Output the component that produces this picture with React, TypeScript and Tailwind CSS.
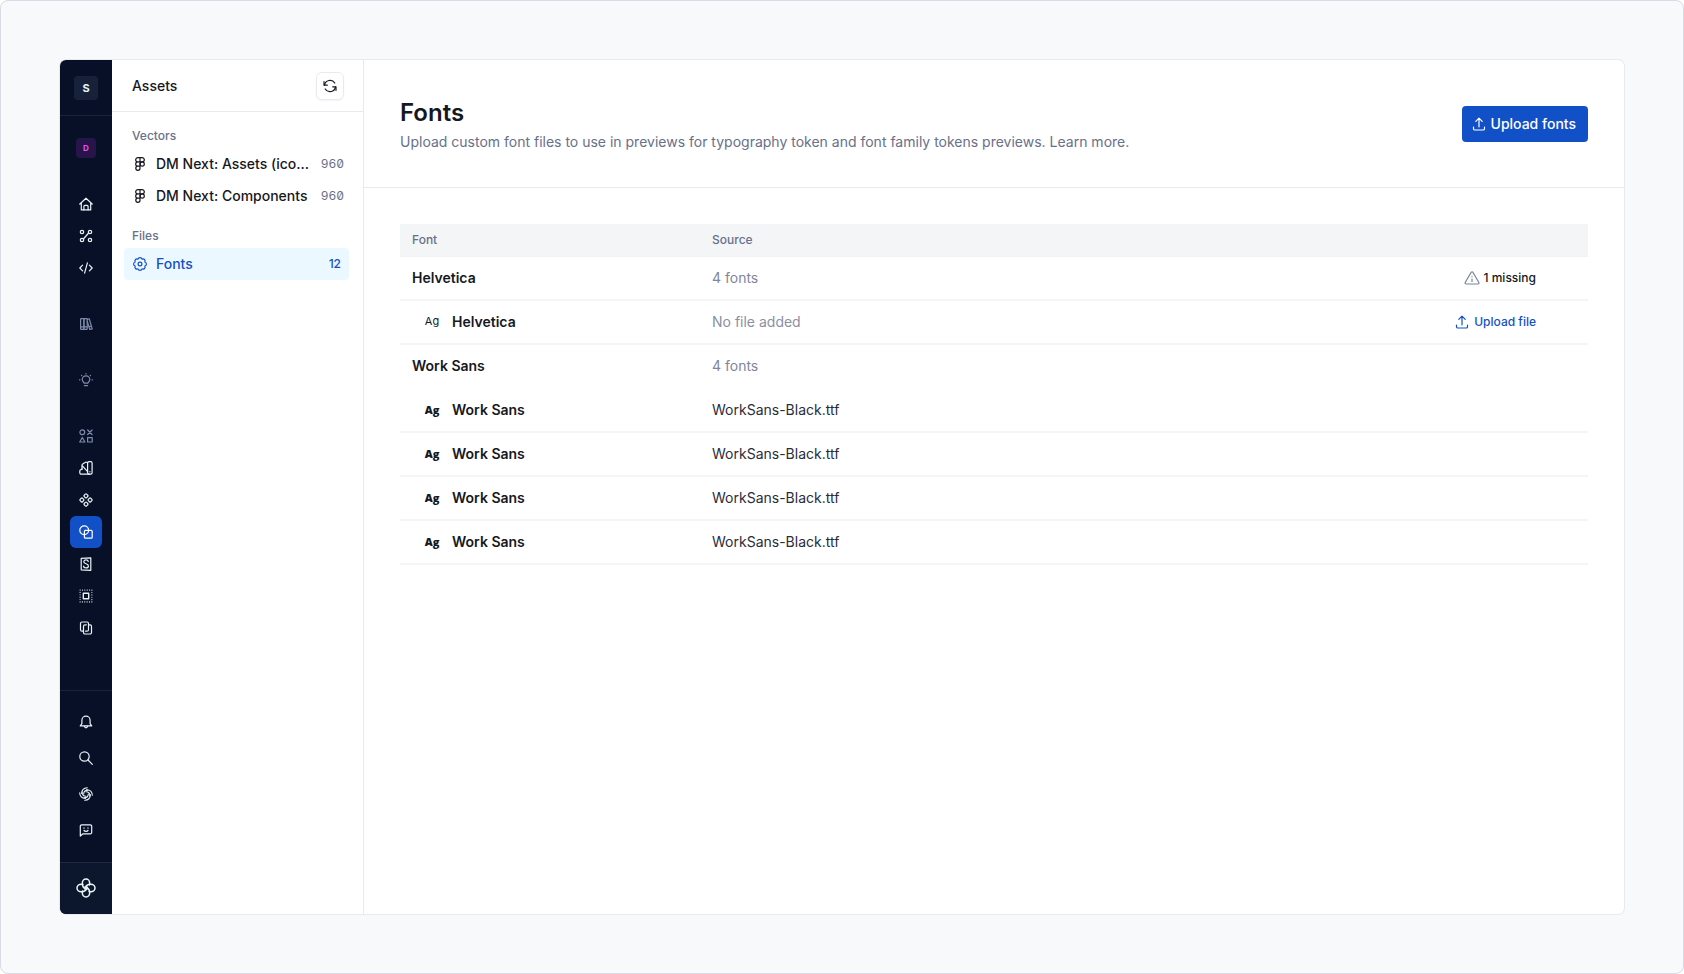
import type { ReactNode } from "react"

type IconProps = { children: ReactNode, size?: string }

const Icon = ({ children, size = "size-4" }: IconProps) => (
  <svg viewBox="0 0 16 16" fill="none" stroke="currentColor" strokeWidth="1.2"
    strokeLinecap="round" strokeLinejoin="round" className={`${size} shrink-0`} aria-hidden="true">
    {children}
  </svg>
)

const HomeIcon = () => (
  <Icon>
    <path d="M1.8 8 8 2.2 14.2 8M3.3 6.8v7.1h9.4V6.8" />
    <path d="M5.9 13.9V10.4a1 1 0 0 1 1-1h2.2a1 1 0 0 1 1 1v3.5" />
  </Icon>
)

const WorkflowIcon = () => (
  <Icon>
    <circle cx="4" cy="4" r="1.7" />
    <circle cx="12" cy="4" r="1.7" />
    <circle cx="4" cy="12" r="1.7" />
    <circle cx="12" cy="12" r="1.7" />
    <path d="M5.4 11 10.6 5" />
  </Icon>
)

const CodeIcon = () => (
  <Icon>
    <path d="M4.6 5.2 1.8 8l2.8 2.8M11.4 5.2 14.2 8l-2.8 2.8M9.4 2.8 6.6 13.2" />
  </Icon>
)

const BooksIcon = () => (
  <Icon>
    <rect x="2.6" y="2.6" width="3.3" height="10.8" rx=".6" />
    <rect x="5.9" y="2.6" width="3.3" height="10.8" rx=".6" />
    <path d="m9.3 3.4 2-.6 2.9 10-2.4.7-2.5-8M2.6 10.8h6.6M11 10.8l2.5-.7" />
  </Icon>
)

const BulbIcon = () => (
  <Icon>
    <path d="M6.2 11.2c0-.8-2-1.5-2-3.6a3.8 3.8 0 0 1 7.6 0c0 2.1-2 2.8-2 3.6ZM6.4 13.6h3.2" />
    <path d="M8 1.6v.4M3.5 3.4l.3.3M12.5 3.4l-.3.3M1.5 7.8h.4M14.1 7.8h.4" />
  </Icon>
)

const ShapesIcon = () => (
  <Icon>
    <circle cx="4.3" cy="4.3" r="2.4" />
    <path d="m9.7 2 4.4 4.5M14.1 2 9.7 6.5M4.3 9.5 1.7 14h5.2Z" />
    <rect x="9.6" y="9.6" width="4.6" height="4.4" />
  </Icon>
)

const SwatchIcon = () => (
  <Icon>
    <rect x="9.6" y="1.7" width="4.5" height="12.5" rx="1.4" />
    <path d="M9.6 2.7 8.4 2.2a1.4 1.4 0 0 0-1.3.2L4.700 4a1.5 1.5 0 0 0-.7 1.300v4.200M4.200 5.600l5.400 6" />
    <path d="M4 8.900 2.300 10.100a1.200 1.200 0 0 0-.5 1v1.700a1.400 1.400 0 0 0 1.400 1.400h8.400M11.900 11.700v.1" />
  </Icon>
)

const ComponentsIcon = () => (
  <Icon>
    {[0, 90, 180, 270].map((angle) => (
      <rect key={angle} x="6.300" y="2.200" width="3.400" height="3.400" rx=".9" transform={`rotate(${angle} 8 8) rotate(45 8 3.900)`} />
    ))}
  </Icon>
)

const AssetsIcon = () => (
  <Icon>
    <circle cx="6.2" cy="6.2" r="4.4" />
    <path d="M10.6 6.4h2.6a1 1 0 0 1 1 1v5.8a1 1 0 0 1-1 1H7.4a1 1 0 0 1-1-1v-2.6" />
    <path d="M6.4 10.6V7.4a1 1 0 0 1 1-1h3.2" />
  </Icon>
)

const StorybookIcon = () => (
  <Icon>
    <path d="M3.2 2.3 12.8 1.8v12.5l-9.6-.5Z" />
    <path d="M10.3 5.5C10 4.4 9.2 3.9 8 3.9S5.8 4.6 5.8 5.8C5.8 8.4 10.4 7.1 10.4 9.9c0 1.3-1 2-2.4 2s-2.4-.7-2.4-1.9" />
  </Icon>
)

const FrameIcon = () => (
  <Icon>
    <rect x="5.3" y="5.3" width="5.4" height="5.4" strokeWidth="1.4" />
    <path d="M2.1 2.1h11.8v11.8H2.1Z" strokeDasharray=".1 2.26" strokeWidth="1.1" />
  </Icon>
)

const CopiesIcon = () => (
  <Icon>
    <path d="M5.4 11.2H4a1.5 1.5 0 0 1-1.5-1.5V3.5A1.5 1.5 0 0 1 4 2h5a1.5 1.5 0 0 1 1.5 1.5v6.2a1.5 1.5 0 0 1-1.5 1.5H7.6" />
    <path d="M10.6 4.8H12a1.5 1.5 0 0 1 1.5 1.5v6.2A1.5 1.5 0 0 1 12 14H7a1.5 1.5 0 0 1-1.5-1.5V6.3A1.5 1.5 0 0 1 7 4.8h1.3" />
  </Icon>
)

const BellIcon = () => (
  <Icon>
    <path d="M3.9 9.6V6.3a4.1 4.1 0 0 1 8.2 0v3.3l1.6 2.3H2.3Z" />
    <path d="M6.4 12.2c.2 1 .8 1.6 1.6 1.6s1.4-.6 1.6-1.6" />
  </Icon>
)

const SearchIcon = () => (
  <Icon>
    <circle cx="6.5" cy="6.5" r="4.7" />
    <path d="m10 10 4.3 4.3" />
  </Icon>
)

const SwirlIcon = () => (
  <Icon>
    {[0, 90, 180, 270].map((angle) => (
      <path key={angle} transform={`rotate(${angle} 8 8)`} strokeWidth="1.1"
        d="M5.7 8C5.7 5.500 7.600 3.900 10.100 4.100M3.700 7.500C3.700 4 6 1.800 9.300 1.700" />
    ))}
  </Icon>
)

const ChatIcon = () => (
  <Icon>
    <path d="M2.3 14V4.2a1.4 1.4 0 0 1 1.4-1.4h8.6a1.4 1.4 0 0 1 1.4 1.4v6.2a1.4 1.4 0 0 1-1.4 1.4H5Z" />
    <path d="M6 5.9v.3M10 5.9v.3M6 8.5c.9 1.1 3.1 1.1 4 0" />
  </Icon>
)

const LogoIcon = () => (
  <svg viewBox="0 0 20 20" fill="none" stroke="currentColor" strokeWidth="1.5" strokeLinecap="round" className="size-5" aria-hidden="true">
    {[0, 90, 180, 270].map((angle) => (
      <path key={angle} transform={`rotate(${angle} 10 10)`}
        d="M10.800 11.300C8.200 10.600 6.300 8 6.300 5.200 6.300 2.800 7.900 1 10 1s3.700 1.800 3.700 4.200c0 .6-.1 1.200-.2 1.700" />
    ))}
  </svg>
)

const RefreshIcon = () => (
  <Icon>
    <path d="M2.5 7.2A5.6 5.6 0 0 1 12.8 5M13.5 8.8A5.6 5.6 0 0 1 3.2 11" />
    <path d="M2 3.7v3.5h3.3M14 12.3V8.8h-3.3" />
  </Icon>
)

const FigmaIcon = () => (
  <Icon>
    <path d="M8 1.7H5.8a2.1 2.1 0 0 0 0 4.2H8ZM8 5.9H5.8a2.1 2.1 0 0 0 0 4.2H8ZM8 10.1H5.8A2.1 2.1 0 1 0 8 12.2ZM8 1.7h2.2a2.1 2.1 0 0 1 0 4.2H8Z" />
    <circle cx="10.2" cy="8" r="2.1" />
  </Icon>
)

const GearIcon = () => (
  <Icon>
    <path d="M6 3.2a2.05 2.05 0 0 1 4 0 2.05 2.05 0 0 1 2.8 2.8 2.05 2.05 0 0 1 0 4 2.05 2.05 0 0 1-2.8 2.8 2.05 2.05 0 0 1-4 0A2.05 2.05 0 0 1 3.2 10a2.05 2.05 0 0 1 0-4A2.05 2.05 0 0 1 6 3.2Z" />
    <circle cx="8" cy="8" r="1.9" />
  </Icon>
)

const UploadIcon = () => (
  <Icon>
    <path d="M8 10.8V2.2M4.8 5.3 8 2.1l3.2 3.2M2.5 11v1.7a1.3 1.3 0 0 0 1.3 1.3h8.4a1.3 1.3 0 0 0 1.3-1.3V11" />
  </Icon>
)

const WarningIcon = () => (
  <Icon>
    <path d="M7.2 2.3a1 1 0 0 1 1.7 0l6 10.2a1 1 0 0 1-.9 1.5H2.1a1 1 0 0 1-.9-1.5ZM8 9v2.5M8 6.7v.1" />
  </Icon>
)

type NavItem = { label: string, icon: ReactNode, muted?: boolean, active?: boolean }

const navGroups: NavItem[][] = [
  [
    { label: "Home", icon: <HomeIcon /> },
    { label: "Workflows", icon: <WorkflowIcon /> },
    { label: "Code", icon: <CodeIcon /> },
  ],
  [{ label: "Documentation", icon: <BooksIcon />, muted: true }],
  [{ label: "Ideas", icon: <BulbIcon />, muted: true }],
  [
    { label: "Design system", icon: <ShapesIcon />, muted: true },
    { label: "Tokens", icon: <SwatchIcon /> },
    { label: "Components", icon: <ComponentsIcon /> },
    { label: "Assets", icon: <AssetsIcon />, active: true },
    { label: "Storybook", icon: <StorybookIcon /> },
    { label: "Frames", icon: <FrameIcon /> },
    { label: "Templates", icon: <CopiesIcon /> },
  ],
]

const footerItems: NavItem[] = [
  { label: "Notifications", icon: <BellIcon /> },
  { label: "Search", icon: <SearchIcon /> },
  { label: "What's new", icon: <SwirlIcon /> },
  { label: "Feedback", icon: <ChatIcon /> },
]

const vectors = [
  { name: "DM Next: Assets (ico...", count: 960 },
  { name: "DM Next: Components", count: 960 },
]

const workSansFiles = ["WorkSans-Black.ttf", "WorkSans-Black.ttf", "WorkSans-Black.ttf", "WorkSans-Black.ttf"]

const NavButton = ({ item }: { item: NavItem }) => (
  <button type="button" aria-label={item.label}
    className={`flex size-8 items-center justify-center rounded-md ${item.active ? "bg-[#1250c8] text-white" : item.muted ? "text-[#7d8aa8]" : "text-[#e8f3f6]"}`}>
    {item.icon}
  </button>
)

const Sidebar = () => (
  <nav className="flex w-[52px] shrink-0 flex-col items-center bg-[#081028]">
    <div className="flex w-full justify-center border-b border-[#1b233c] pt-4 pb-[15px]">
      <button type="button" className="size-6 rounded bg-[#18213a] text-[11px] font-bold text-[#e8f3f6]">S</button>
    </div>
    <button type="button" className="mt-[22px] size-5 rounded-sm bg-[#26144a] text-[8px] font-bold text-[#e454f0]">D</button>
    <div className="mt-[30px] flex flex-col gap-6">
      {navGroups.map((group, i) => (
        <div key={i} className="flex flex-col">
          {group.map((item) => <NavButton key={item.label} item={item} />)}
        </div>
      ))}
    </div>
    <div className="mt-auto flex w-full flex-col items-center gap-1 border-t border-[#1b233c] pt-[15px] pb-4">
      {footerItems.map((item) => <NavButton key={item.label} item={item} />)}
    </div>
    <a href="#" aria-label="Supernova" className="flex h-[52px] w-full justify-center border-t border-[#1f2941] bg-[#0c172e] pt-[15px] text-[#e8f6f6]">
      <LogoIcon />
    </a>
  </nav>
)

const AssetsPanel = () => (
  <aside className="w-[252px] shrink-0 border-r border-[#e9eaf1]">
    <div className="flex h-[52px] items-center justify-between border-b border-[#e9eaf0] pr-[19px] pl-5">
      <h2 className="text-sm font-medium">Assets</h2>
      <button type="button" aria-label="Refresh" className="flex size-7 items-center justify-center rounded-md border border-[#e9eaf0] shadow-xs">
        <RefreshIcon />
      </button>
    </div>
    <h3 className="mt-4 px-5 text-xs font-medium text-[#68708a]">Vectors</h3>
    <ul className="mt-1">
      {vectors.map((vector) => (
        <li key={vector.name}>
          <a href="#" className="flex h-8 items-center pr-[19px] pl-5">
            <FigmaIcon />
            <span className="ml-2 text-sm font-medium whitespace-nowrap">{vector.name}</span>
            <span className="ml-auto text-xs text-[#68708a] slashed-zero tabular-nums">{vector.count}</span>
          </a>
        </li>
      ))}
    </ul>
    <h3 className="mt-4 px-5 text-xs font-medium text-[#68708a]">Files</h3>
    <a href="#" className="mt-1 mr-[14px] ml-3 flex h-8 items-center rounded bg-[#ecf8ff] px-2 text-[#1250c8]">
      <GearIcon />
      <span className="ml-2 text-sm font-medium">Fonts</span>
      <span className="ml-auto text-xs font-medium">12</span>
    </a>
  </aside>
)

const rowStyle = "h-11 [&>td]:border-b-2 [&>td]:border-[#f4f4f9]"

const FontsTable = () => (
  <table className="w-full table-fixed border-separate border-spacing-0 text-left text-sm">
    <colgroup>
      <col className="w-[300px]" />
      <col />
      <col className="w-[300px]" />
    </colgroup>
    <thead>
      <tr className="h-[33px] bg-[#f4f5f7] text-xs text-[#68708a] [&>th]:border-b [&>th]:border-[#f1f2f5]">
        <th className="px-3 font-medium">Font</th>
        <th className="px-3 font-medium">Source</th>
        <th aria-label="Status" />
      </tr>
    </thead>
    <tbody>
      <tr className={rowStyle}>
        <td className="px-3 font-semibold">Helvetica</td>
        <td className="px-3 text-[#80869a]">4 fonts</td>
        <td className="pr-[52px]">
          <div className="flex items-center justify-end gap-1 text-xs font-medium">
            <span className="text-[#7a8199]"><WarningIcon /></span>
            1 missing
          </div>
        </td>
      </tr>
      <tr className={rowStyle}>
        <td className="pl-6 font-semibold">
          <div className="flex items-center gap-3">
            <span className="w-4 text-center text-[11px] font-normal">Ag</span>
            Helvetica
          </div>
        </td>
        <td className="px-3 text-[#8b90a0]">No file added</td>
        <td className="pr-[52px]">
          <button type="button" className="ml-auto flex items-center gap-1 text-xs font-medium text-[#1250c8]">
            <UploadIcon />
            Upload file
          </button>
        </td>
      </tr>
      <tr className="h-11 [&>td]:border-b-2 [&>td]:border-transparent">
        <td className="px-3 font-semibold">Work Sans</td>
        <td className="px-3 text-[#80869a]">4 fonts</td>
        <td />
      </tr>
      {workSansFiles.map((file, i) => (
        <tr key={i} className={rowStyle}>
          <td className="pl-6 font-semibold">
            <div className="flex items-center gap-3">
              <span className="w-4 text-center font-['Open_Sans'] text-[11px] font-extrabold">Ag</span>
              Work Sans
            </div>
          </td>
          <td className="px-3 text-[#2a2d38]">{file}</td>
          <td />
        </tr>
      ))}
    </tbody>
  </table>
)

const App = () => {
  return (
    <div className="flex min-h-screen rounded-lg border border-[#d9dae5] bg-[#f8f9fb] p-[59px] font-['Inter',sans-serif] text-[#161821]">
      <div className="flex w-full overflow-hidden rounded-md bg-white ring-1 ring-[#e9eaf1]">
        <Sidebar />
        <AssetsPanel />
        <main className="min-w-0 flex-1">
          <header className="flex h-32 items-center justify-between border-b border-[#e9eaf0] px-9">
            <div className="pt-0.5">
              <h1 className="text-2xl font-semibold">Fonts</h1>
              <p className="mt-[3px] text-sm text-[#68708a]">
                Upload custom font files to use in previews for typography token and font family tokens previews. <a href="#">Learn more.</a>
              </p>
            </div>
            <button type="button" className="flex h-9 items-center gap-1 rounded bg-[#1250c8] pr-3 pl-[9px] text-sm font-medium text-white">
              <UploadIcon />
              Upload fonts
            </button>
          </header>
          <section className="p-9">
            <FontsTable />
          </section>
        </main>
      </div>
    </div>
  )
}

export default App
